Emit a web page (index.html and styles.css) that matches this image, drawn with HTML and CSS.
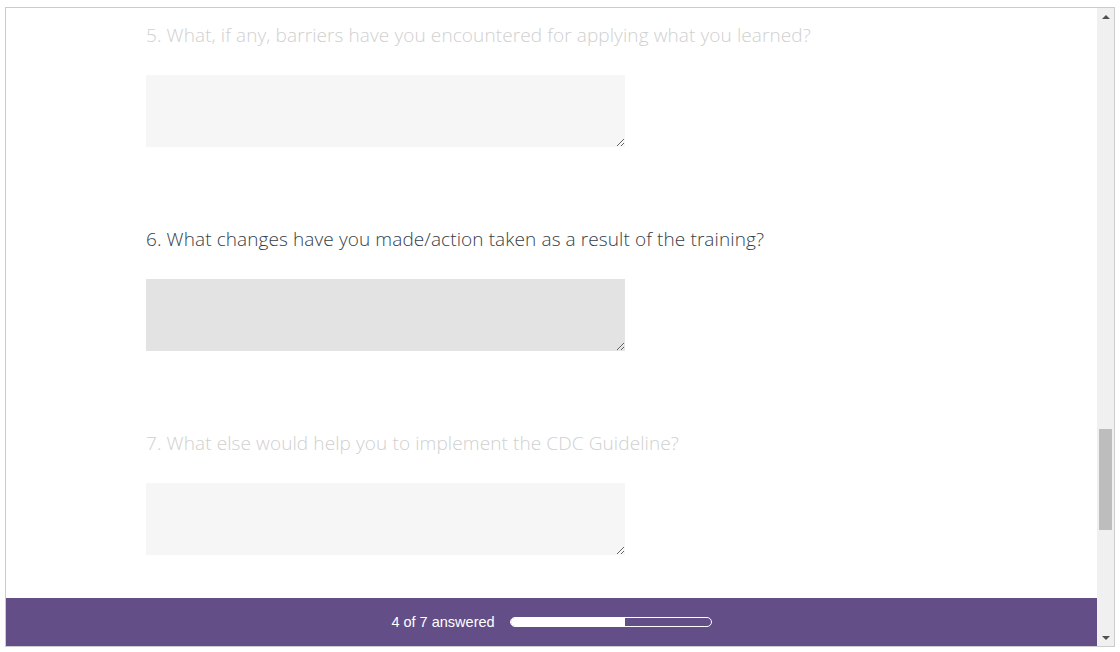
FILE: index.html
```html
<!DOCTYPE html>
<html lang="en">
<head>
    <meta charset="UTF-8">
    <meta name="viewport" content="width=device-width, initial-scale=1.0">
    <title>Training Follow-up Survey</title>
    <link rel="stylesheet" href="styles.css">
</head>
<body>
    <div class="frame">
        <div class="main">
            <div class="survey">
                <div class="question faded">
                    <h4 class="question-title">5. What, if any, barriers have you encountered for applying what you learned?</h4>
                    <textarea class="answer" rows="3"></textarea>
                </div>
                <div class="question active">
                    <h4 class="question-title">6. What changes have you made/action taken as a result of the training?</h4>
                    <textarea class="answer" rows="3"></textarea>
                </div>
                <div class="question faded">
                    <h4 class="question-title">7. What else would help you to implement the CDC Guideline?</h4>
                    <textarea class="answer" rows="3"></textarea>
                </div>
            </div>
            <div class="progress-bar">
                <span class="progress-text">4 of 7 answered</span>
                <div class="progress-track">
                    <div class="progress-fill" style="width: 57%"></div>
                </div>
            </div>
        </div>
        <div class="scrollbar">
            <div class="scroll-arrow up"></div>
            <div class="scroll-track">
                <div class="scroll-thumb"></div>
            </div>
            <div class="scroll-arrow down"></div>
        </div>
    </div>
</body>
</html>
```

FILE: styles.css
```css
body {
    margin: 0;
    background-color: white;
    font-family: "Open Sans", Arial, sans-serif;
}
.frame {
    margin: 7px 5px;
    width: 1108px;
    height: 638px;
    border: 1px solid #cccccc;
    display: flex;
    overflow: hidden;
}
.main {
    flex: 1;
    display: flex;
    flex-direction: column;
}
.survey {
    flex: 1;
    padding: 15px 0 0 140px;
    overflow: hidden;
}
.question {
    margin-bottom: 80px;
}
.question-title {
    margin: 0 0 27px 0;
    font-size: 19px;
    line-height: 25px;
    font-weight: 300;
    letter-spacing: 0.1px;
    color: #333e48;
}
.answer {
    display: block;
    width: 479px;
    height: 72px;
    border: none;
    margin: 0;
    padding: 8px;
    box-sizing: border-box;
    background-color: #e3e3e3;
    resize: vertical;
}
.faded .question-title {
    color: #d0d0d0;
}
.faded .answer {
    background-color: #f6f6f6;
}
.progress-bar {
    height: 48px;
    background-color: #634e87;
    display: flex;
    justify-content: center;
    align-items: center;
    gap: 15px;
}
.progress-text {
    color: white;
    font-family: "Liberation Sans", Arial, sans-serif;
    font-size: 14.5px;
}
.progress-track {
    width: 200px;
    height: 8px;
    border: 1px solid white;
    border-radius: 5px;
    overflow: hidden;
}
.progress-fill {
    height: 100%;
    background-color: white;
}
.scrollbar {
    width: 17px;
    background-color: #f0f0f0;
    display: flex;
    flex-direction: column;
}
.scroll-arrow {
    height: 17px;
    display: flex;
    justify-content: center;
    align-items: center;
}
.scroll-arrow::before {
    content: "";
    border-left: 4px solid transparent;
    border-right: 4px solid transparent;
}
.scroll-arrow.up::before {
    border-bottom: 4px solid #505050;
}
.scroll-arrow.down::before {
    border-top: 4px solid #505050;
}
.scroll-track {
    flex: 1;
    padding-top: 404px;
}
.scroll-thumb {
    margin: 0 2px;
    height: 101px;
    background-color: #bdbdbd;
}
```
